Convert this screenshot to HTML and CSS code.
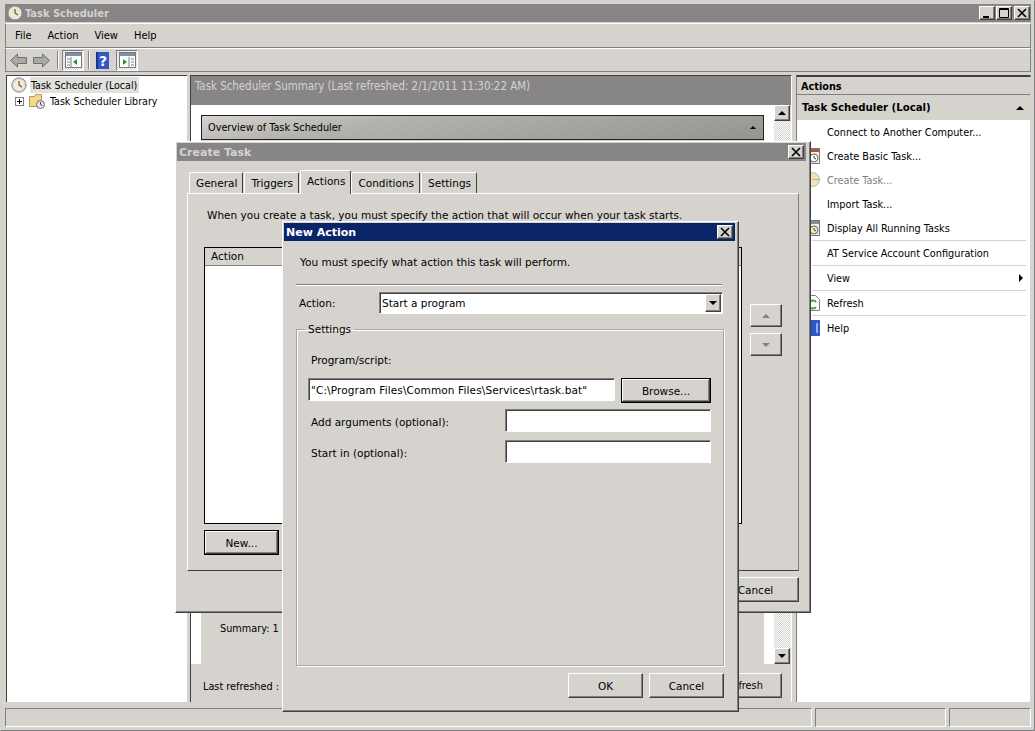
FILE: index.html
```html
<!DOCTYPE html>
<html lang="en">
<head>
    <meta charset="UTF-8">
    <title>Task Scheduler</title>
    <link rel="stylesheet" href="styles.css">
</head>
<body>
<div class="desktop">
    <div class="main-window">
        <div class="titlebar main-title">
            <svg class="app-icon" width="16" height="16" viewBox="0 0 16 16"><circle cx="8" cy="8" r="7" fill="#e8e6e0" stroke="#8c8a80"/><circle cx="8" cy="8" r="5" fill="#f4e8c8"/><path d="M8 4v4l3 2" fill="none" stroke="#555" stroke-width="1.2"/></svg>
            <span class="title-text">Task Scheduler</span>
            <div class="win-buttons">
                <button class="win-btn"><svg width="10" height="10" viewBox="0 0 10 10"><path d="M1 8h6v2H1z"/></svg></button>
                <button class="win-btn"><svg width="10" height="10" viewBox="0 0 10 10"><path d="M0.5 0.5h9v9h-9z" fill="none" stroke="#000"/><path d="M0 1.5h10" stroke="#000"/></svg></button>
                <button class="win-btn win-close"><svg width="10" height="10" viewBox="0 0 10 10"><path d="M1 1l8 8M9 1l-8 8" stroke="#000" stroke-width="1.6"/></svg></button>
            </div>
        </div>
        <div class="menubar">
            <span>File</span><span>Action</span><span>View</span><span>Help</span>
        </div>
        <div class="toolbar">
            <svg class="tool-arrow" width="17" height="15" viewBox="0 0 17 15"><path d="M0.5 7.5L7.5 1v3.5h9v6h-9V14z" fill="#a8a8a4" stroke="#6e6e6a"/></svg>
            <svg class="tool-arrow" width="17" height="15" viewBox="0 0 17 15"><path d="M16.5 7.5L9.5 1v3.5h-9v6h9V14z" fill="#a8a8a4" stroke="#6e6e6a"/></svg>
            <div class="tool-sep"></div>
            <div class="tool-btn">
                <svg width="17" height="16" viewBox="0 0 17 16"><rect x="0.5" y="0.5" width="16" height="15" fill="#fff" stroke="#7a7a7a"/><rect x="1" y="1" width="15" height="3" fill="#7f8fa6"/><path d="M6 5v10" stroke="#7a7a7a"/><path d="M2 7h3M2 10h3M2 13h3" stroke="#5a87b0"/><path d="M12 7v6l-4-3z" fill="#1c9c3c"/></svg>
            </div>
            <div class="tool-sep second"></div>
            <svg class="tool-help" width="13" height="17" viewBox="0 0 13 17"><rect width="13" height="17" fill="#2f57c8"/><rect x="0" y="0" width="2" height="17" fill="#1a358e"/><text x="7" y="13.5" class="help-mark">?</text></svg>
            <div class="tool-btn">
                <svg width="17" height="16" viewBox="0 0 17 16"><rect x="0.5" y="0.5" width="16" height="15" fill="#fff" stroke="#7a7a7a"/><rect x="1" y="1" width="15" height="3" fill="#7f8fa6"/><path d="M10 5v10" stroke="#7a7a7a"/><path d="M12 7h3M12 10h3M12 13h3" stroke="#5a87b0"/><path d="M4 7v6l4-3z" fill="#1c9c3c"/></svg>
            </div>
        </div>

        <div class="panes">
            <div class="tree-pane">
                <div class="tree-row">
                    <svg width="16" height="16" viewBox="0 0 16 16"><circle cx="8" cy="8" r="7.2" fill="#d8d8de" stroke="#8a8a92"/><circle cx="8" cy="8" r="5.2" fill="#f6ecd0"/><path d="M8 4v4l3 2" fill="none" stroke="#555" stroke-width="1.2"/></svg>
                    <span class="tree-label selected">Task Scheduler (Local)</span>
                </div>
                <div class="tree-row child">
                    <span class="expander"></span>
                    <svg width="16" height="16" viewBox="0 0 16 16"><path d="M0.5 3.5h5l1-2h6v12h-12z" fill="#f4d98a" stroke="#b49a50"/><circle cx="11.5" cy="11.5" r="4" fill="#e8e8ea" stroke="#6a6a72"/><path d="M11.5 9v2.5l2 1" fill="none" stroke="#444"/></svg>
                    <span class="tree-label">Task Scheduler Library</span>
                </div>
            </div>

            <div class="center-pane">
                <div class="center-head">Task Scheduler Summary (Last refreshed: 2/1/2011 11:30:22 AM)</div>
                <div class="center-scroll">
                    <div class="center-content">
                        <div class="section-bar">
                            <span>Overview of Task Scheduler</span>
                            <span class="arrow-up small"></span>
                        </div>
                        <div class="section-body">
                            <span class="summary-text">Summary: 1</span>
                        </div>
                    </div>
                    <div class="scrollbar">
                        <button class="scroll-btn"><span class="arrow-up"></span></button>
                        <div class="scroll-track"></div>
                        <button class="scroll-btn"><span class="arrow-down"></span></button>
                    </div>
                </div>
                <div class="center-foot">
                    <span>Last refreshed :</span>
                    <button class="btn refresh-btn">Refresh</button>
                </div>
            </div>

            <div class="actions-pane">
                <div class="actions-head">Actions</div>
                <div class="actions-group">
                    <span>Task Scheduler (Local)</span>
                    <span class="arrow-up"></span>
                </div>
                <ul class="actions-list">
                    <li>Connect to Another Computer...</li>
                    <li>
                        <svg class="action-icon" width="15" height="16" viewBox="0 0 15 16"><rect x="0.5" y="0.5" width="14" height="15" fill="#f4f0e4" stroke="#807a70"/><rect x="1" y="1" width="13" height="3" fill="#b0523c"/><circle cx="9" cy="10" r="4" fill="#fff" stroke="#666"/><path d="M9 8v2l2 1" fill="none" stroke="#444"/></svg>
                        Create Basic Task...
                    </li>
                    <li class="disabled">
                        <svg class="action-icon" width="15" height="15" viewBox="0 0 15 15"><circle cx="7.5" cy="7.5" r="7" fill="#f2e2b8" stroke="#b8b4a8"/><path d="M7.5 7.5h7" stroke="#aaa"/></svg>
                        Create Task...
                    </li>
                    <li>Import Task...</li>
                    <li class="rule">
                        <svg class="action-icon" width="15" height="16" viewBox="0 0 15 16"><rect x="0.5" y="0.5" width="14" height="15" fill="#f0f0f0" stroke="#70757a"/><rect x="1" y="1" width="13" height="3" fill="#7f8fa6"/><circle cx="9" cy="10" r="4" fill="#f4e6b8" stroke="#666"/><path d="M9 8v2l2 1" fill="none" stroke="#444"/></svg>
                        Display All Running Tasks
                    </li>
                    <li class="rule">AT Service Account Configuration</li>
                    <li class="rule">View<span class="arrow-right"></span></li>
                    <li class="rule">
                        <svg class="action-icon" width="15" height="16" viewBox="0 0 15 16"><path d="M0.5 0.5h10l4 4v11h-14z" fill="#fff" stroke="#80807a"/><path d="M11 7a4 4 0 1 0 0 5" fill="none" stroke="#2fae3e" stroke-width="2"/></svg>
                        Refresh
                    </li>
                    <li>
                        <svg class="action-icon" width="15" height="16" viewBox="0 0 15 16"><rect width="15" height="16" fill="#2f57c8"/><path d="M12 3v10" stroke="#fff"/></svg>
                        Help
                    </li>
                </ul>
            </div>
        </div>

        <div class="statusbar">
            <div class="status-cell wide"></div>
            <div class="status-cell mid"></div>
            <div class="status-cell end"></div>
        </div>
    </div>

    <!-- dialogs sit over the main window -->
    <div class="dialog create-task">
        <div class="titlebar inactive">
            <span class="title-text">Create Task</span>
            <button class="win-btn win-close"><svg width="10" height="10" viewBox="0 0 10 10"><path d="M1 1l8 8M9 1l-8 8" stroke="#000" stroke-width="1.6"/></svg></button>
        </div>
        <div class="tabs">
            <span class="tab">General</span>
            <span class="tab">Triggers</span>
            <span class="tab active">Actions</span>
            <span class="tab">Conditions</span>
            <span class="tab">Settings</span>
        </div>
        <div class="tab-panel">
            <p class="panel-note">When you create a task, you must specify the action that will occur when your task starts.</p>
            <div class="action-row">
                <div class="action-list">
                    <div class="list-head">Action</div>
                </div>
                <div class="move-btns">
                    <button class="btn move-btn"><span class="arrow-up grey"></span></button>
                    <button class="btn move-btn"><span class="arrow-down grey"></span></button>
                </div>
            </div>
            <button class="btn btn-default new-btn">New...</button>
        </div>
        <div class="dialog-foot">
            <button class="btn foot-cancel">Cancel</button>
        </div>
    </div>

    <div class="dialog new-action">
        <div class="titlebar active-title">
            <span class="title-text">New Action</span>
            <button class="win-btn win-close"><svg width="10" height="10" viewBox="0 0 10 10"><path d="M1 1l8 8M9 1l-8 8" stroke="#000" stroke-width="1.6"/></svg></button>
        </div>
        <p class="intro">You must specify what action this task will perform.</p>
        <div class="sep"></div>
        <div class="action-select">
            <label>Action:</label>
            <div class="select-box">
                <span>Start a program</span>
                <button class="win-btn"><span class="arrow-down"></span></button>
            </div>
        </div>
        <fieldset class="settings">
            <legend>Settings</legend>
            <div class="field-label">Program/script:</div>
            <div class="program-row">
                <div class="text-box program-box">"C:\Program Files\Common Files\Services\rtask.bat"</div>
                <button class="btn btn-default browse-btn">Browse...</button>
            </div>
            <div class="opt-row">
                <label>Add arguments (optional):</label>
                <div class="text-box opt-box"></div>
            </div>
            <div class="opt-row">
                <label>Start in (optional):</label>
                <div class="text-box opt-box"></div>
            </div>
        </fieldset>
        <div class="dialog-buttons">
            <button class="btn">OK</button>
            <button class="btn">Cancel</button>
        </div>
    </div>
</div>
</body>
</html>
```

FILE: styles.css
```css
* {
    box-sizing: border-box;
}
body {
    margin: 0;
    background: #d6d3ce;
    font-family: "DejaVu Sans", Tahoma, sans-serif;
    font-size: 10.5px;
    color: #000;
}
button {
    font: inherit;
    color: inherit;
    padding: 0;
}
p {
    margin: 0;
}
.desktop {
    position: relative;
    width: 1035px;
    height: 731px;
    overflow: hidden;
}

/* main window */
.main-window {
    width: 1035px;
    height: 731px;
    padding: 4px 3px 3px 5px;
    background: #d6d3ce;
    border-top: 1px solid #d6d3ce;
    border-left: 1px solid #d6d3ce;
    border-right: 1px solid #808080;
    border-bottom: 1px solid #808080;
    display: flex;
    flex-direction: column;
}
.titlebar {
    display: flex;
    align-items: center;
    font-weight: bold;
    color: #d6d3ce;
}
.main-title {
    height: 18px;
    margin-top: -1px;
    margin-left: -1px;
    background: #878586;
    padding: 0 1px 0 2px;
    font-family: "DejaVu Sans Condensed", "DejaVu Sans", sans-serif;
    font-size: 11px;
}
.app-icon {
    margin-right: 2px;
}
.win-buttons {
    margin-left: auto;
    display: flex;
    gap: 1px;
}
.win-btn {
    width: 16px;
    height: 14px;
    background: #d6d3ce;
    border: 1px solid;
    border-color: #fff #404040 #404040 #fff;
    display: flex;
    align-items: center;
    justify-content: center;
    box-shadow: inset -1px -1px #808080;
}
.win-buttons .win-close {
    margin-left: 1px;
}
.menubar {
    height: 25px;
    margin: 1px 0 0 -1px;
    border: 1px solid #808080;
    border-top-color: #fff;
    font-family: "DejaVu Sans Condensed", "DejaVu Sans", sans-serif;
    font-size: 11px;
    display: flex;
    align-items: center;
    padding-left: 9px;
    gap: 16px;
}
.toolbar {
    height: 24px;
    margin-left: -1px;
    border: 1px solid #808080;
    border-top-color: #fff;
    display: flex;
    align-items: center;
    padding-left: 4px;
}
.tool-arrow {
    margin-right: 6px;
}
.tool-sep {
    width: 2px;
    height: 18px;
    margin: 0 3px 0 1px;
    border-left: 1px solid #808080;
    border-right: 1px solid #fff;
}
.tool-sep.second {
    margin-left: 4px;
    margin-right: 6px;
}
.tool-btn {
    width: 22px;
    height: 21px;
    display: flex;
    align-items: center;
    justify-content: center;
    border: 1px solid;
    border-color: #808080 #fff #fff #808080;
    background: repeating-conic-gradient(#fff 0 25%, #d6d3ce 0 50%) 0 0 / 2px 2px;
}
.tool-help {
    margin-right: 7px;
}
.help-mark {
    font-size: 14px;
    font-weight: bold;
    fill: #fff;
    text-anchor: middle;
}
.panes {
    flex: 1;
    display: flex;
    margin-top: 3px;
    min-height: 0;
    font-family: "DejaVu Sans Condensed", "DejaVu Sans", sans-serif;
    font-size: 10.8px;
}
.tree-pane {
    width: 181px;
    background: #fff;
    border-top: 1px solid #404040;
    border-left: 1px solid #404040;
    padding: 1px 0 0 4px;
    font-size: 10.6px;
}
.tree-row {
    height: 16px;
    display: flex;
    align-items: center;
}
.tree-label {
    height: 16px;
    line-height: 16px;
    padding: 0 2px 0 1px;
}
.tree-row > svg + .tree-label {
    margin-left: 3px;
}
.tree-label.selected {
    background: #e2e1dd;
}
.tree-row.child {
    padding-left: 4px;
}
.tree-row.child .tree-label {
    margin-left: 4px;
}
.expander {
    width: 9px;
    height: 9px;
    margin-right: 5px;
    border: 1px solid #808080;
    background:
        linear-gradient(#000, #000) center / 5px 1px no-repeat,
        linear-gradient(#000, #000) center / 1px 5px no-repeat,
        #fff;
}
.center-pane {
    width: 602px;
    margin-left: 3px;
    border-left: 1px solid #404040;
    border-top: 1px solid #404040;
    border-right: 1px solid #fff;
    display: flex;
    flex-direction: column;
}
.center-head {
    height: 29px;
    background: #878586;
    color: #d6d3ce;
    padding: 3px 0 0 4px;
    font-size: 11.4px;
}
.center-scroll {
    height: 559px;
    display: flex;
}
.center-content {
    width: 584px;
    background: #fff;
    padding: 10px 10px 0 10px;
    display: flex;
    flex-direction: column;
}
.section-bar {
    height: 25px;
    background: linear-gradient(170deg, #d6d3ce 0, #b4b2ac 30%, #96948e 100%);
    border: 1px solid #222;
    display: flex;
    align-items: center;
    justify-content: space-between;
    padding: 0 7px 0 6px;
}
.section-body {
    flex: 1;
    background: #d6d3ce;
    padding: 482px 0 0 19px;
}
.scrollbar {
    width: 17px;
    display: flex;
    flex-direction: column;
}
.scroll-btn {
    height: 16px;
    width: 16px;
    background: #d6d3ce;
    border: 1px solid;
    border-color: #fff #404040 #404040 #fff;
    box-shadow: inset -1px -1px #808080;
    display: flex;
    align-items: center;
    justify-content: center;
}
.scroll-track {
    flex: 1;
    background: repeating-conic-gradient(#fff 0 25%, #d6d3ce 0 50%) 0 0 / 2px 2px;
}
.center-foot {
    flex: 1;
    display: flex;
    align-items: flex-start;
    justify-content: space-between;
    padding: 16px 9px 0 12px;
}
.refresh-btn {
    width: 84px;
    height: 23px;
    margin-top: -7px;
}
.arrow-up,
.arrow-down,
.arrow-right {
    display: inline-block;
    width: 0;
    height: 0;
    border-style: solid;
    border-color: transparent;
}
.arrow-up {
    border-width: 0 4px 4px;
    border-bottom-color: #000;
}
.arrow-down {
    border-width: 4px 4px 0;
    border-top-color: #000;
}
.arrow-up.small {
    border-width: 0 3px 3px;
    border-bottom-color: #000;
}
.arrow-up.grey {
    border-bottom-color: #808080;
}
.arrow-down.grey {
    border-top-color: #808080;
}
.arrow-right {
    border-width: 4px 0 4px 4px;
    border-left-color: #000;
    margin-left: auto;
    margin-right: 3px;
}

/* actions pane */
.actions-pane {
    width: 235px;
    margin-left: 4px;
    border-top: 2px solid #404040;
    border-left: 1px solid #808080;
    border-right: 1px solid #d6d3ce;
    display: flex;
    flex-direction: column;
}
.actions-head {
    height: 18px;
    font-weight: bold;
    padding: 3px 0 0 4px;
    border-bottom: 1px solid #808080;
}
.actions-group {
    height: 25px;
    display: flex;
    align-items: center;
    justify-content: space-between;
    padding: 0 5px 0 5px;
    font-weight: bold;
    font-size: 11.3px;
}
.actions-group .arrow-up {
    margin-right: 1px;
}
.actions-list {
    flex: 1;
    list-style: none;
    margin: 0;
    padding: 0 4px 0 0;
    background: #fff;
}
.actions-list li {
    position: relative;
    height: 24px;
    display: flex;
    align-items: center;
    padding-left: 30px;
}
.actions-list li.rule {
    height: 25px;
    margin-left: 15px;
    padding-left: 15px;
    border-bottom: 1px solid #d6d3ce;
}
.actions-list li.disabled {
    color: #808080;
}
.action-icon {
    position: absolute;
    left: 8px;
    top: 4px;
}
.actions-list li.rule .action-icon {
    left: -7px;
}
.statusbar {
    height: 19px;
    margin: 6px 0 0 -1px;
    display: flex;
    gap: 3px;
}
.status-cell {
    border: 1px solid;
    border-color: #808080 #fff #fff #808080;
}
.status-cell.wide {
    width: 807px;
}
.status-cell.mid {
    width: 131px;
}
.status-cell.end {
    flex: 1;
}

/* dialogs */
.dialog {
    position: absolute;
    background: #d6d3ce;
    border: 1px solid;
    border-color: #fff #404040 #404040 #fff;
    box-shadow: inset -1px -1px #808080;
    padding: 1px;
}
.dialog .titlebar {
    height: 18px;
    padding: 0 2px 0 2px;
    justify-content: space-between;
    font-size: 11px;
}
.inactive {
    background: #878586;
}
.active-title {
    background: #0a246a;
    color: #fff;
}
.btn {
    width: 75px;
    height: 25px;
    background: #d6d3ce;
    border: 1px solid;
    border-color: #fff #404040 #404040 #fff;
    box-shadow: inset -1px -1px #808080;
    text-align: center;
}
.btn-default {
    border-color: #000;
    box-shadow: inset -1px -1px #404040, inset 1px 1px #fff, inset -2px -2px #808080;
}
.create-task {
    left: 175px;
    top: 141px;
    width: 636px;
    height: 472px;
    padding: 1px 4px 0 1px;
}
.tabs {
    display: flex;
    height: 24px;
    margin: 8px 0 0 12px;
    align-items: flex-end;
    gap: 1px;
}
.tab {
    height: 21px;
    padding: 4px 5px 0 6px;
    border: 1px solid;
    border-bottom: 0;
    border-color: #fff #404040 #fff #fff;
    border-radius: 2px 2px 0 0;
}
.tab.active {
    height: 24px;
    padding-top: 4px;
    margin: 0 -1px 0 0;
    position: relative;
    top: 1px;
    background: #d6d3ce;
    z-index: 1;
}
.tab-panel {
    height: 378px;
    margin: 0 7px 0 10px;
    border: 1px solid;
    border-color: #fff #808080 #404040 #fff;
    padding: 15px 0 0 16px;
    display: flex;
    flex-direction: column;
}
.panel-note {
    margin-left: 3px;
    margin-bottom: 26px;
}
.action-row {
    display: flex;
    height: 277px;
}
.action-list {
    width: 538px;
    background: #fff;
    border: 1px solid #000;
}
.list-head {
    height: 18px;
    background: #d6d3ce;
    border-bottom: 1px solid #808080;
    padding: 2px 0 0 6px;
}
.move-btns {
    display: flex;
    flex-direction: column;
    gap: 6px;
    margin: 57px 0 0 8px;
}
.move-btn {
    width: 32px;
    height: 23px;
    display: flex;
    align-items: center;
    justify-content: center;
}
.new-btn {
    margin-top: 6px;
}
.dialog-foot {
    display: flex;
    justify-content: flex-end;
    padding: 6px 7px 0 0;
}
.foot-cancel {
    width: 87px;
}

/* New Action */
.new-action {
    left: 282px;
    top: 221px;
    width: 457px;
    height: 491px;
    padding: 1px 3px 0 1px;
}
.intro {
    margin: 15px 0 0 16px;
    height: 15px;
}
.sep {
    height: 2px;
    margin: 13px 13px 0 12px;
    border-top: 1px solid #808080;
    border-bottom: 1px solid #fff;
}
.action-select {
    display: flex;
    align-items: center;
    margin: 6px 12px 0 15px;
}
.action-select label {
    width: 80px;
}
.select-box {
    flex: 1;
    height: 22px;
    background: #fff;
    border: 1px solid;
    border-color: #808080 #fff #fff #808080;
    box-shadow: inset 1px 1px #404040;
    display: flex;
    align-items: center;
    justify-content: space-between;
    padding: 0 1px 0 2px;
}
.select-box .win-btn {
    height: 18px;
}
.settings {
    margin: 9px 14px 0 12px;
    padding: 0;
    height: 343px;
    border: 1px solid #a8a6a2;
    box-shadow: 1px 1px #fff, inset 1px 1px #fff;
}
.settings legend {
    margin-left: 8px;
    padding: 0 3px;
}
.field-label {
    margin: 19px 0 0 14px;
    height: 15px;
}
.program-row {
    display: flex;
    margin: 9px 12px 0 11px;
    gap: 6px;
}
.text-box {
    height: 23px;
    background: #fff;
    border: 1px solid;
    border-color: #808080 #fff #fff #808080;
    box-shadow: inset 1px 1px #404040;
    padding: 5px 0 0 2px;
    white-space: nowrap;
    letter-spacing: 0.12px;
}
.program-box {
    width: 307px;
}
.browse-btn {
    width: 90px;
}
.opt-row {
    display: flex;
    align-items: center;
    margin: 6px 12px 0 14px;
    justify-content: space-between;
}
.opt-row label {
    padding-top: 3px;
}
.opt-row + .opt-row {
    margin-top: 8px;
}
.opt-box {
    width: 206px;
}
.dialog-buttons {
    display: flex;
    justify-content: flex-end;
    gap: 6px;
    margin: 7px 11px 0 0;
}
```
